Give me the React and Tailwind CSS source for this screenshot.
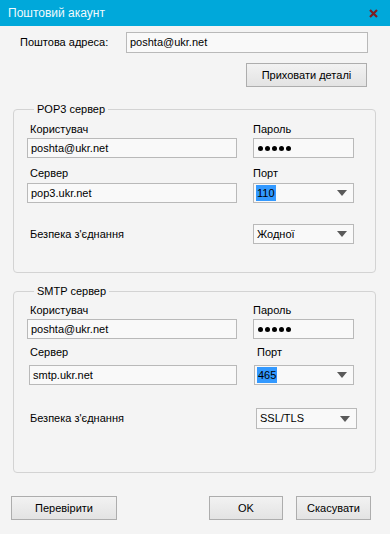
import React from "react";

const font = { fontFamily: '"Liberation Sans", Arial, sans-serif' };

// Plain text box, optional password dots
const TextBox = ({ value, password, className = "" }) => (
  <div className={`h-[20px] border border-[#b9b9b9] bg-[#f9f9f9] flex items-center px-[3px] text-[11px] text-black ${className}`}>
    {password ? (
      <div className="flex gap-[2px] pl-[1px]">
        {[0, 1, 2, 3, 4].map((i) => (
          <span key={i} className="w-[5px] h-[5px] rounded-full bg-black" />
        ))}
      </div>
    ) : (
      value
    )}
  </div>
);

const Select = ({ value, selected, className = "" }) => (
  <div className={`h-[20px] border border-[#b9b9b9] bg-[#f9f9f9] flex items-center justify-between pl-[2px] pr-[6px] text-[11px] text-black ${className}`}>
    <span className={selected ? "bg-[#3399ff] px-[1px] leading-[16px]" : "pl-[1px]"}>{value}</span>
    <svg width="10" height="6" viewBox="0 0 10 6">
      <path d="M0 0h10L5 6z" fill="#5a5a5a" />
    </svg>
  </div>
);

const Button = ({ children, className = "" }) => (
  <button className={`h-[24px] border border-[#adadad] bg-gradient-to-b from-[#f2f2f2] to-[#e3e3e3] text-[11px] text-black ${className}`}>
    {children}
  </button>
);

const ServerGroup = ({ title, user, server, port, security, v }) => (
  <fieldset className={`ml-[13px] w-[363px] border border-[#d3d3d3] rounded-[4px] px-[13px] ${v.wrap}`}>
    <legend className="ml-[7px] px-[3px] text-[11px] leading-[14px] text-black">{title}</legend>
    <div className={`flex gap-[16px] ${v.top}`}>
      <div className="w-[210px]">
        <div className="leading-[16px] text-[11px] pl-[3px] mb-[1px]">Користувач</div>
        <TextBox value={user} />
        <div className={`leading-[16px] text-[11px] pl-[3px] ${v.server}`}>Сервер</div>
        <TextBox value={server} className={v.serverBox} />
      </div>
      <div className="w-[101px]">
        <div className="leading-[16px] text-[11px] mb-[1px]">Пароль</div>
        <TextBox password />
        <div className={`leading-[16px] text-[11px] ${v.server} ${v.portLabel}`}>Порт</div>
        <Select value={port} selected className={v.portBox} />
      </div>
    </div>
    <div className={`flex items-center gap-[16px] ${v.sec}`}>
      <div className="w-[210px] text-[11px] pl-[3px]">Безпека з'єднання</div>
      <Select value={security} className={`w-[101px] ${v.secBox}`} />
    </div>
  </fieldset>
);

const App = () => {
  return (
    <div className="w-[390px] h-[534px] bg-[#f4f4f4] text-black overflow-hidden" style={font}>
      {/* Title bar */}
      <div className="h-[26px] bg-[#00a8da] flex items-center justify-between pl-[8px] pr-[12px]">
        <span className="text-white text-[12px] opacity-95">Поштовий акаунт</span>
        <svg width="9" height="9" viewBox="0 0 9 9">
          <path d="M1 1L8 8M8 1L1 8" stroke="#7d1d21" strokeWidth="2.2" />
        </svg>
      </div>

      {/* Address */}
      <div className="flex items-center mt-[6px] pl-[20px]">
        <span className="w-[106px] text-[11px]">Поштова адреса:</span>
        <TextBox value="poshta@ukr.net" className="w-[242px] h-[21px]" />
      </div>
      <div className="flex justify-end pr-[23px] mt-[10px]">
        <Button className="w-[121px]">Приховати деталі</Button>
      </div>

      <ServerGroup
        title="POP3 сервер"
        user="poshta@ukr.net"
        server="pop3.ukr.net"
        port="110"
        security="Жодної"
        v={{ wrap: "mt-[15px] pb-[28px]", top: "pt-[5px]", server: "mt-[7px] mb-[2px]", serverBox: "", portLabel: "", portBox: "", sec: "mt-[21px]", secBox: "" }}
      />

      <ServerGroup
        title="SMTP сервер"
        user="poshta@ukr.net"
        server="smtp.ukr.net"
        port="465"
        security="SSL/TLS"
        v={{ wrap: "mt-[11px] pb-[43px]", top: "pt-[4px]", server: "mt-[5px] mb-[5px]", serverBox: "ml-[2px]", portLabel: "pl-[4px]", portBox: "ml-[1px]", sec: "mt-[23px]", secBox: "ml-[3px] h-[21px]" }}
      />

      {/* Bottom buttons */}
      <div className="flex items-center mt-[23px] pl-[11px] pr-[19px]">
        <Button className="w-[106px]">Перевірити</Button>
        <Button className="w-[74px] ml-auto">OK</Button>
        <Button className="w-[75px] ml-[13px]">Скасувати</Button>
      </div>
    </div>
  );
};

export default App;
